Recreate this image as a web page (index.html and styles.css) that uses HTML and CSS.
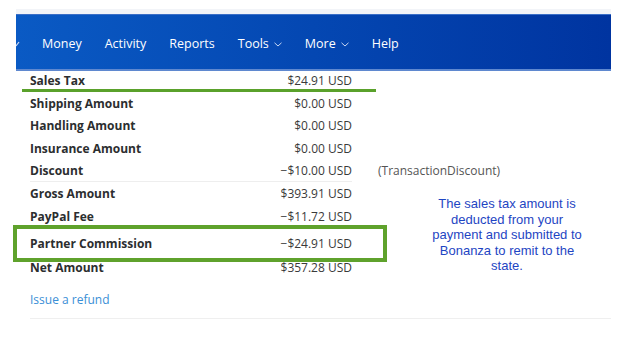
FILE: index.html
```html
<!doctype html>
<html>
  <head>
    <meta charset="UTF-8" />
    <title>Transaction details</title>
    <link rel="stylesheet" href="styles.css">
  </head>
  <body>
    <div class="page">
      <!-- top band -->
      <div class="top-band"></div>
      <!-- navbar -->
      <div class="navbar">
        <svg class="nav-cut" width="4" height="8" viewBox="0 0 4 8">
          <polyline points="0,7 3,3" fill="none" stroke="#cfdcf3" stroke-width="1.2" />
        </svg>
        <span class="nav-item">Money</span>
        <span class="nav-item">Activity</span>
        <span class="nav-item">Reports</span>
        <span class="nav-item">Tools
          <svg class="nav-chevron" width="8" height="5" viewBox="0 0 8 5">
            <polyline points="0.5,0.8 4,4 7.5,0.8" fill="none" stroke="#c6d6f2" stroke-width="1" />
          </svg>
        </span>
        <span class="nav-item">More
          <svg class="nav-chevron" width="8" height="5" viewBox="0 0 8 5">
            <polyline points="0.5,0.8 4,4 7.5,0.8" fill="none" stroke="#c6d6f2" stroke-width="1" />
          </svg>
        </span>
        <span class="nav-item">Help</span>
      </div>
      <!-- details -->
      <div class="details">
        <div class="row row-first">
          <span class="row-label">Sales Tax</span>
          <span class="row-value">$24.91 USD</span>
        </div>
        <div class="mark-line"></div>
        <div class="row">
          <span class="row-label">Shipping Amount</span>
          <span class="row-value">$0.00 USD</span>
        </div>
        <div class="row">
          <span class="row-label">Handling Amount</span>
          <span class="row-value">$0.00 USD</span>
        </div>
        <div class="row">
          <span class="row-label">Insurance Amount</span>
          <span class="row-value">$0.00 USD</span>
        </div>
        <div class="row row-divided">
          <span class="row-label">Discount</span>
          <span class="row-value">&minus;$10.00 USD</span>
          <span class="row-note">(TransactionDiscount)</span>
        </div>
        <div class="row">
          <span class="row-label">Gross Amount</span>
          <span class="row-value">$393.91 USD</span>
        </div>
        <div class="row">
          <span class="row-label">PayPal Fee</span>
          <span class="row-value">&minus;$11.72 USD</span>
        </div>
        <div class="mark-box">
          <div class="row row-boxed">
            <span class="row-label">Partner Commission</span>
            <span class="row-value">&minus;$24.91 USD</span>
          </div>
        </div>
        <div class="row row-net">
          <span class="row-label">Net Amount</span>
          <span class="row-value">$357.28 USD</span>
        </div>
        <div class="refund">Issue a refund</div>
        <div class="bottom-line"></div>

        <!-- annotation -->
        <div class="callout">
          The sales tax amount is<br>
          deducted from your<br>
          payment and submitted to<br>
          Bonanza to remit to the<br>
          state.
        </div>
      </div>
    </div>
  </body>
</html>
```

FILE: styles.css
```css
body {
  margin: 0;
  background: #ffffff;
  font-family: 'Open Sans', 'Noto Sans', sans-serif;
  -webkit-font-smoothing: antialiased;
}

.page {
  width: 621px;
  height: 340px;
  overflow: hidden;
  padding-top: 9px;
  box-sizing: border-box;
}

/* top band */
.top-band {
  margin-left: 16px;
  width: 595px;
  height: 5px;
  background: #f2f4f8;
}

/* navbar */
.navbar {
  margin-left: 16px;
  width: 595px;
  height: 54px;
  display: flex;
  align-items: center;
  gap: 23px;
  box-sizing: content-box;
  border-top: 1px solid #3b6fc7;
  border-bottom: 2px solid #5f88cf;
  background: linear-gradient(90deg, #0a5ac4 0%, #0447b2 50%, #0034a0 100%);
}
.navbar > .nav-cut {
  margin-right: -1px;
  margin-top: 2px;
}
.navbar > .nav-item {
  color: #ffffff;
  font-size: 12.5px;
  display: flex;
  align-items: center;
  gap: 5px;
  margin-top: 3px;
}
.nav-chevron {
  margin-top: 1px;
}

/* details */
.details {
  position: relative;
  padding-top: 1px;
}
.row {
  margin-left: 30px;
  width: 322px;
  height: 22.6px;
  display: flex;
  align-items: center;
  justify-content: space-between;
  font-size: 12px;
  position: relative;
}
.row-first {
  height: 17px;
}
.row > .row-label {
  font-weight: 700;
  color: #2c2e2f;
}
.row > .row-value {
  color: #3a3a3a;
}
.row > .row-note {
  position: absolute;
  left: 348px;
  color: #555555;
  white-space: nowrap;
}
.row-divided {
  border-bottom: 1px solid #eeeeee;
  box-sizing: border-box;
}

.mark-line {
  margin-left: 22px;
  width: 354px;
  height: 3px;
  background: #5aa12b;
}

.mark-box {
  margin-left: 13px;
  margin-top: -3px;
  width: 366px;
  height: 29px;
  border: 4px solid #5fa22c;
  display: flex;
  align-items: center;
}
.mark-box > .row-boxed {
  margin-left: 13px;
  height: 29px;
}

.row-net {
  margin-top: -5px;
}

.refund {
  margin-left: 30px;
  margin-top: 12px;
  font-size: 12px;
  color: #3a8fd6;
}

.bottom-line {
  margin-left: 30px;
  margin-top: 10px;
  width: 581px;
  height: 1px;
  background: #efefef;
}

/* annotation */
.callout {
  position: absolute;
  left: 417px;
  top: 125px;
  width: 180px;
  text-align: center;
  font-family: 'Liberation Sans', Arial, sans-serif;
  font-size: 13px;
  line-height: 15.5px;
  color: #1e45c3;
}
```
